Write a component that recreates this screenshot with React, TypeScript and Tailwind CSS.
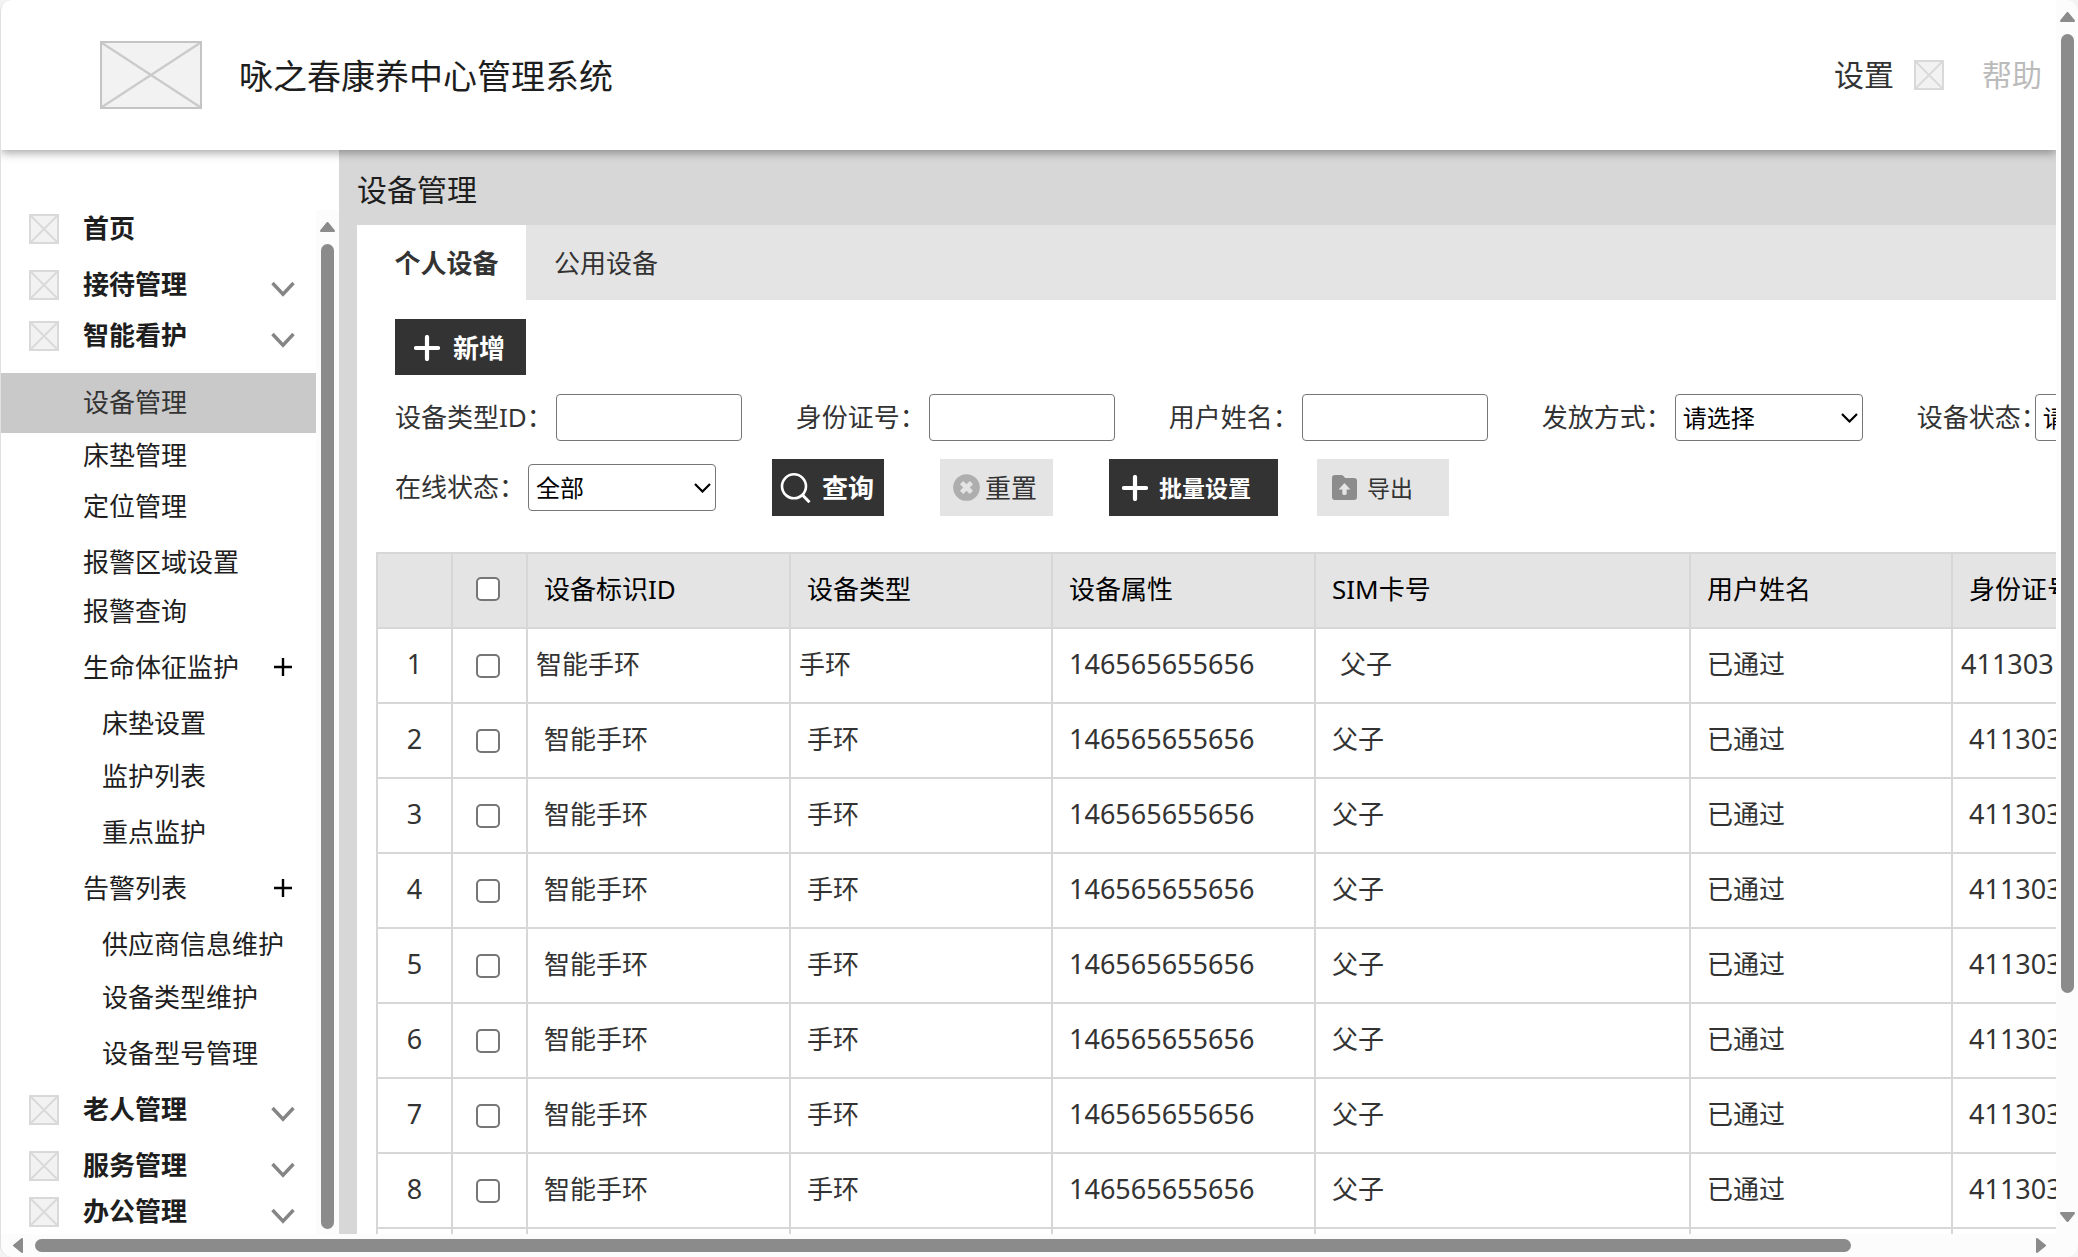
import React from "react";

function Placeholder({ className }: { className: string }) {
  return (
    <svg className={className} viewBox="0 0 30 30" preserveAspectRatio="none" aria-hidden="true">
      <rect x="1" y="1" width="28" height="28" fill="#f2f2f2" stroke="#d9d9d9" strokeWidth="2" />
      <path d="M2 2L28 28M28 2L2 28" stroke="#dadada" strokeWidth="2" fill="none" />
    </svg>
  );
}

function Logo() {
  return (
    <svg className="h-[68px] w-[102px] shrink-0" viewBox="0 0 102 68" aria-hidden="true">
      <rect x="1" y="1" width="100" height="66" fill="#f2f2f2" stroke="#c4c4c4" strokeWidth="2" />
      <path d="M2 2L100 66M100 2L2 66" stroke="#cbcbcb" strokeWidth="2.4" fill="none" />
    </svg>
  );
}

function Chevron() {
  return (
    <svg className="mt-2 h-4 w-6 shrink-0" viewBox="0 0 24 16" fill="none" aria-hidden="true">
      <path d="M1.5 2L12 13.2L22.5 2" stroke="#858585" strokeWidth="3.4" />
    </svg>
  );
}

function PlusIcon() {
  return (
    <svg className="size-[26px] shrink-0" viewBox="0 0 26 26" fill="none" aria-hidden="true">
      <path d="M13 2V24M2 13H24" stroke="#fff" strokeWidth="4.2" strokeLinecap="round" />
    </svg>
  );
}

function SearchIcon() {
  return (
    <svg className="h-[30px] w-[31px] shrink-0" viewBox="0 0 31 30" fill="none" aria-hidden="true">
      <circle cx="14" cy="13.3" r="12" stroke="#fff" strokeWidth="2.6" />
      <path d="M22 21.5L29.5 29.2" stroke="#fff" strokeWidth="3" />
    </svg>
  );
}

function ResetIcon() {
  return (
    <svg className="size-[27px] shrink-0" viewBox="0 0 27 27" fill="none" aria-hidden="true">
      <circle cx="13.5" cy="13.5" r="13.3" fill="#aeaeae" />
      <path d="M8.6 8.6L18.4 18.4M18.4 8.6L8.6 18.4" stroke="#e4e4e4" strokeWidth="4.6" />
    </svg>
  );
}

function ExportIcon() {
  return (
    <svg className="h-[25px] w-[25px] shrink-0" viewBox="0 0 25 25" fill="none" aria-hidden="true">
      <path d="M3 0H9.5Q11 0 12 1.6L13 3H22Q25 3 25 6V22Q25 25 22 25H3Q0 25 0 22V3Q0 0 3 0Z" fill="#8c8c8c" />
      <path d="M12.5 8L18.4 14.5H14.7V18.5Q14.7 20 12.5 20Q10.3 20 10.3 18.5V14.5H6.6Z" fill="#e4e4e4" />
    </svg>
  );
}

type NavItem = {
  label: string;
  kind: "group" | "item" | "sub" | "expand" | "active";
  gap: string;
  chevron?: boolean;
};

const nav: NavItem[] = [
  { label: "首页", kind: "group", gap: "mt-0" },
  { label: "接待管理", kind: "group", gap: "mt-[10px]", chevron: true },
  { label: "智能看护", kind: "group", gap: "mt-[5px]", chevron: true },
  { label: "设备管理", kind: "active", gap: "mt-[14px]" },
  { label: "床垫管理", kind: "item", gap: "mt-0" },
  { label: "定位管理", kind: "item", gap: "mt-[5px]" },
  { label: "报警区域设置", kind: "item", gap: "mt-[10px]" },
  { label: "报警查询", kind: "item", gap: "mt-[3px]" },
  { label: "生命体征监护", kind: "expand", gap: "mt-[10px]" },
  { label: "床垫设置", kind: "sub", gap: "mt-[10px]" },
  { label: "监护列表", kind: "sub", gap: "mt-[7px]" },
  { label: "重点监护", kind: "sub", gap: "mt-[10px]" },
  { label: "告警列表", kind: "expand", gap: "mt-[10px]" },
  { label: "供应商信息维护", kind: "sub", gap: "mt-[10px]" },
  { label: "设备类型维护", kind: "sub", gap: "mt-[7px]" },
  { label: "设备型号管理", kind: "sub", gap: "mt-[10px]" },
  { label: "老人管理", kind: "group", gap: "mt-[10px]", chevron: true },
  { label: "服务管理", kind: "group", gap: "mt-[10px]", chevron: true },
  { label: "办公管理", kind: "group", gap: "mt-0", chevron: true },
];

function NavRow({ item }: { item: NavItem }) {
  if (item.kind === "group") {
    return (
      <li className={item.gap}>
        <a href="#" className="flex h-[46px] items-center pr-[21px] pl-7 font-bold text-[#1e1e1e]">
          <Placeholder className="size-[30px] shrink-0" />
          <span className="ml-6 flex-1 pb-[2px]">{item.label}</span>
          {item.chevron && <Chevron />}
        </a>
      </li>
    );
  }
  if (item.kind === "active") {
    return (
      <li className={item.gap}>
        <a href="#" aria-current="page" className="flex h-[60px] items-center bg-[#c9c9c9] pb-[2px] pl-[82px]">
          {item.label}
        </a>
      </li>
    );
  }
  if (item.kind === "expand") {
    return (
      <li className={item.gap}>
        <a href="#" className="flex h-[46px] items-center justify-between pr-6 pb-[2px] pl-[82px] text-[#1e1e1e]">
          {item.label}
          <svg className="size-[18px]" viewBox="0 0 18 18" aria-hidden="true">
            <path d="M9 0V18M0 9H18" stroke="#000" strokeWidth="2.4" />
          </svg>
        </a>
      </li>
    );
  }
  return (
    <li className={item.gap}>
      <a
        href="#"
        className={
          item.kind === "sub"
            ? "flex h-[46px] items-center pb-[2px] pl-[101px] text-[#1e1e1e]"
            : "flex h-[46px] items-center pb-[2px] pl-[82px] text-[#1e1e1e]"
        }
      >
        {item.label}
      </a>
    </li>
  );
}

function Sidebar() {
  return (
    <div className="flex w-[338px] shrink-0 bg-white pt-14">
      <nav className="min-w-0 flex-1 overflow-hidden" aria-label="主导航">
        <ul>
          {nav.map((item) => (
            <NavRow key={item.label} item={item} />
          ))}
        </ul>
      </nav>
      <div className="mt-1 flex w-[23px] flex-col items-center bg-[#fcfcfc] pt-3 pb-[5px]" aria-hidden="true">
        <svg className="h-[10px] w-[15px]" viewBox="0 0 15 10">
          <path d="M7.5 1L14 9H1Z" fill="#8b8b8b" stroke="#8b8b8b" strokeWidth="2" strokeLinejoin="round" />
        </svg>
        <div className="mt-3 w-[13px] flex-1 rounded-full bg-[#8b8b8b]" />
      </div>
    </div>
  );
}

function TextField({ id, label }: { id: string; label: string }) {
  return (
    <div className="flex shrink-0 items-center gap-[3px]">
      <label htmlFor={id} className="pb-[2px] whitespace-nowrap">
        {label}
      </label>
      <input id={id} type="text" className="h-[47px] w-[186px] rounded-[4px] border border-[#767676] bg-white px-2 text-black outline-none" />
    </div>
  );
}

function SelectField({ id, label, value, tight }: { id: string; label: string; value: string; tight?: boolean }) {
  return (
    <div className="flex shrink-0 items-center gap-[3px]">
      <label htmlFor={id} className={tight ? "w-[115px] pb-[2px] whitespace-nowrap" : "pb-[2px] whitespace-nowrap"}>
        {label}
      </label>
      <div className="relative">
        <select id={id} defaultValue={value} className="h-[47px] w-[188px] appearance-none rounded-[4px] border border-[#767676] bg-white pl-[7px] text-[24px] text-black outline-none">
          <option>{value}</option>
        </select>
        <svg className="pointer-events-none absolute top-[19px] right-[5px] h-[10px] w-[17px]" viewBox="0 0 17 10" fill="none" aria-hidden="true">
          <path d="M1 1L8.5 8.5L16 1" stroke="#000" strokeWidth="2.2" />
        </svg>
      </div>
    </div>
  );
}

const columns = ["设备标识ID", "设备类型", "设备属性", "SIM卡号", "用户姓名", "身份证号"];

const rows = [1, 2, 3, 4, 5, 6, 7, 8, 9].map((n) => ({
  n,
  cells: ["智能手环", "手环", "146565655656", "父子", "已通过", "411303199001011234"],
}));

/* The first row carries its own cell insets. */
const firstRowPad = ["pl-2", "pl-2", "pl-4", "pl-6", "pl-4", "pl-2"];

function Check({ label }: { label: string }) {
  return (
    <input
      type="checkbox"
      aria-label={label}
      className="mr-1 block size-6 appearance-none rounded-[5px] border-2 border-[#767676] bg-white checked:bg-[#767676]"
    />
  );
}

function DeviceTable() {
  return (
    <table className="w-[1838px] table-fixed border-collapse">
      <colgroup>
        <col className="w-[75px]" />
        <col className="w-[75px]" />
        <col className="w-[263px]" />
        <col className="w-[262px]" />
        <col className="w-[263px]" />
        <col className="w-[375px]" />
        <col className="w-[262px]" />
        <col className="w-[263px]" />
      </colgroup>
      <thead>
        <tr className="h-[75px] bg-[#e4e4e4] text-black">
          <th className="border-2 border-[#d7d7d7]" aria-label="序号" />
          <th className="border-2 border-[#d7d7d7] pb-1">
            <div className="flex justify-center">
              <Check label="全选" />
            </div>
          </th>
          {columns.map((c) => (
            <th key={c} className="overflow-hidden border-2 border-[#d7d7d7] pb-1 pl-4 text-left font-normal whitespace-nowrap">
              {c}
            </th>
          ))}
        </tr>
      </thead>
      <tbody>
        {rows.map((r) => (
          <tr key={r.n} className="h-[75px]">
            <td className="border-2 border-[#d7d7d7] pb-1 text-center text-[27px]">{r.n}</td>
            <td className="border-2 border-[#d7d7d7]">
              <div className="flex justify-center">
                <Check label={"选择第" + r.n + "行"} />
              </div>
            </td>
            {r.cells.map((c, i) => (
              <td
                key={i}
                className={
                  "overflow-hidden border-2 border-[#d7d7d7] pb-1 whitespace-nowrap " +
                  (i === 2 || i === 5 ? "text-[27px] " : "") +
                  (r.n === 1 ? firstRowPad[i] : "pl-4")
                }
              >
                {c}
              </td>
            ))}
          </tr>
        ))}
      </tbody>
    </table>
  );
}

function Main() {
  return (
    <main className="flex min-w-0 flex-1 flex-col bg-[#d7d7d7] pl-[18px]">
      <h2 className="flex h-[75px] shrink-0 items-center pt-1 text-[30px] text-[#1e1e1e]">设备管理</h2>
      <div className="flex h-[75px] shrink-0 bg-[#e4e4e4]" role="tablist">
        <button role="tab" aria-selected="true" className="w-[169px] bg-white pl-[10px] text-center font-bold">
          个人设备
        </button>
        <button role="tab" aria-selected="false" className="px-7">
          公用设备
        </button>
      </div>
      <div className="min-h-0 flex-1 overflow-hidden bg-white pt-[19px]">
        <button className="ml-[38px] flex h-[56px] items-center gap-[13px] bg-[#333] pt-[2px] pr-[21px] pb-0 pl-[19px] font-bold text-white">
          <PlusIcon />
          新增
        </button>
        <form className="mt-[19px] flex flex-col pl-[38px]">
          <div className="flex gap-[54px]">
            <TextField id="type-id" label="设备类型ID：" />
            <TextField id="card-id" label="身份证号：" />
            <TextField id="user-name" label="用户姓名：" />
            <SelectField id="grant" label="发放方式：" value="请选择" />
            <SelectField id="status" label="设备状态：" value="请选择" tight />
          </div>
          <div className="mt-[18px] flex items-center">
            <SelectField id="online" label="在线状态：" value="全部" />
            <button type="button" className="ml-14 flex h-[57px] items-center gap-[11px] bg-[#333] pr-[10px] pl-2 font-bold text-white">
              <SearchIcon />
              查询
            </button>
            <button type="button" className="ml-14 flex h-[57px] items-center gap-[5px] bg-[#e4e4e4] pr-4 pl-[13px]">
              <ResetIcon />
              重置
            </button>
            <button type="button" className="ml-14 flex h-[57px] items-center gap-[11px] bg-[#333] pr-[27px] pl-[13px] text-[23px] font-bold text-white">
              <PlusIcon />
              批量设置
            </button>
            <button type="button" className="ml-[39px] flex h-[57px] items-center gap-[10px] bg-[#e4e4e4] pr-9 pl-[15px] text-[23px]">
              <ExportIcon />
              导出
            </button>
          </div>
        </form>
        <div className="mt-9 pl-[19px]">
          <DeviceTable />
        </div>
      </div>
    </main>
  );
}

export default function App() {
  return (
    <div className="h-screen bg-[#f3f3f3] font-['Noto_Sans','Noto_Sans_CJK_SC',sans-serif] text-[26px] leading-9 text-[#333]">
      <div className="flex h-full flex-col overflow-hidden rounded-[12px] border-l border-[#e0e0e0] bg-[#fcfcfc]">
        <div className="flex min-h-0 flex-1">
          <div className="flex min-w-0 flex-1 flex-col overflow-hidden">
            <header className="relative z-10 flex h-[150px] shrink-0 items-center bg-white pr-[14px] pl-[99px] shadow-[0_3px_9px_rgba(0,0,0,0.35)]">
              <Logo />
              <h1 className="ml-[37px] flex-1 pt-[2px] text-[34px] text-[#1e1e1e]">咏之春康养中心管理系统</h1>
              <a href="#" className="text-[30px]">设置</a>
              <Placeholder className="mr-[38px] ml-5 size-[30px]" />
              <a href="#" className="text-[30px] text-[#bbb]">帮助</a>
            </header>
            <div className="flex min-h-0 flex-1">
              <Sidebar />
              <Main />
            </div>
          </div>
          <div className="flex w-[22px] flex-col items-center py-3" aria-hidden="true">
            <svg className="h-[10px] w-[15px]" viewBox="0 0 15 10">
              <path d="M7.5 1L14 9H1Z" fill="#8b8b8b" stroke="#8b8b8b" strokeWidth="2" strokeLinejoin="round" />
            </svg>
            <div className="mt-3 min-h-0 flex-1">
              <div className="h-[81.4%] w-[13px] rounded-full bg-[#8b8b8b]" />
            </div>
            <svg className="h-[10px] w-[15px]" viewBox="0 0 15 10">
              <path d="M7.5 9L14 1H1Z" fill="#8b8b8b" stroke="#8b8b8b" strokeWidth="2" strokeLinejoin="round" />
            </svg>
          </div>
        </div>
        <div className="flex h-[23px] shrink-0 items-center pr-8 pl-3" aria-hidden="true">
          <svg className="h-[15px] w-[10px]" viewBox="0 0 10 15">
            <path d="M1 7.5L9 1V14Z" fill="#8b8b8b" stroke="#8b8b8b" strokeWidth="2" strokeLinejoin="round" />
          </svg>
          <div className="mx-3 flex-1">
            <div className="h-[13px] w-[91.3%] rounded-full bg-[#8b8b8b]" />
          </div>
          <svg className="h-[15px] w-[10px]" viewBox="0 0 10 15">
            <path d="M9 7.5L1 1V14Z" fill="#8b8b8b" stroke="#8b8b8b" strokeWidth="2" strokeLinejoin="round" />
          </svg>
        </div>
      </div>
    </div>
  );
}
